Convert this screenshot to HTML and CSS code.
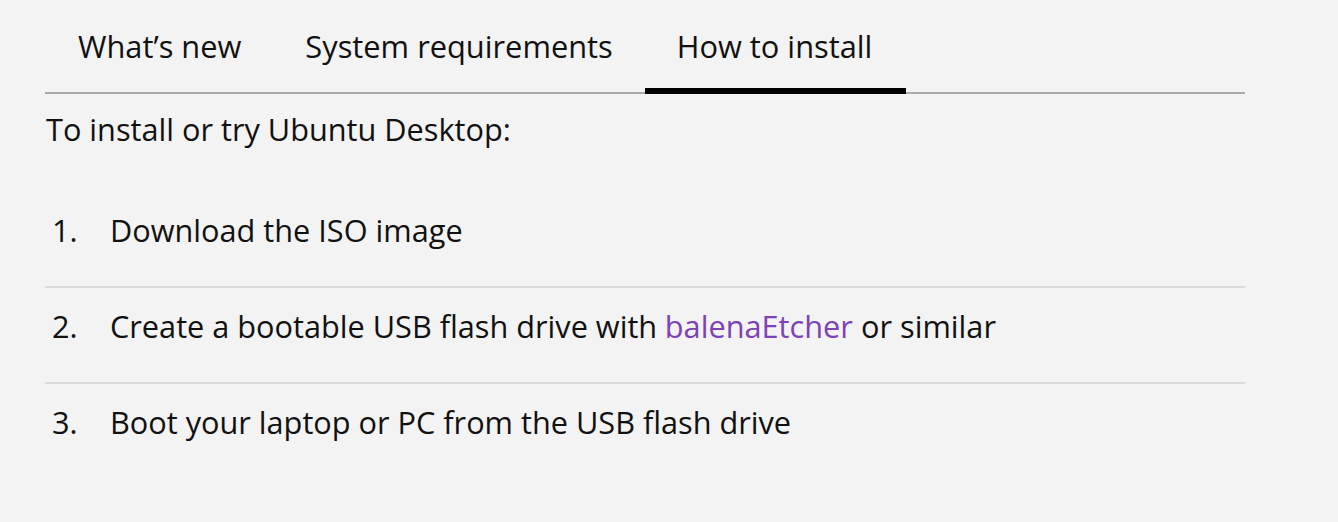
FILE: index.html
```html
<!DOCTYPE html>
<html lang="en">
<head>
<meta charset="utf-8">
<title>How to install</title>
<link rel="stylesheet" href="styles.css">
</head>
<body>
<main class="wrap">
  <nav class="tabs">
    <a class="tab" href="#">What’s new</a>
    <a class="tab" href="#">System requirements</a>
    <a class="tab is-active" href="#">How to install</a>
  </nav>
  <p class="intro">To install or try Ubuntu Desktop:</p>
  <ol class="steps">
    <li class="step">Download the ISO image</li>
    <li class="step">Create a bootable USB flash drive with <a class="link" href="#">balenaEtcher</a> or similar</li>
    <li class="step">Boot your laptop or PC from the USB flash drive</li>
  </ol>
</main>
</body>
</html>
```
FILE: styles.css
```css
html, body {
  margin: 0;
  background: #f3f3f3;
}
body {
  font-family: "Open Sans", "Noto Sans", sans-serif;
  font-size: 30.7px;
  line-height: 40px;
  color: #111;
}
.wrap {
  width: 1200px;
  margin-left: 45px;
}
.tabs {
  display: flex;
  border-bottom: 2px solid #aaaaaa;
}
.tab {
  position: relative;
  padding: 26px 32px 26px 33px;
  font-size: 30.8px;
  color: #111;
  text-decoration: none;
}
.tab + .tab {
  padding-left: 32px;
}
.tab.is-active {
  padding-right: 34px;
}
.tab.is-active::after {
  content: "";
  position: absolute;
  left: 0;
  right: 0;
  bottom: -2px;
  height: 6px;
  background: #000;
}
.intro {
  margin: 15px 0 0 1px;
}
.steps {
  list-style: none;
  margin: 43px 0 0;
  padding: 0;
  counter-reset: step;
}
.step {
  counter-increment: step;
  display: flex;
  padding: 18px 0 36px;
  border-bottom: 2px solid #dadada;
}
.step:last-child {
  border-bottom: none;
}
.step::before {
  content: counter(step) ".";
  flex: 0 0 58px;
  padding-left: 7px;
}
.link {
  color: #7d42b8;
  text-decoration: none;
  margin: 0 0.27em 0 0.25em;
}
```
